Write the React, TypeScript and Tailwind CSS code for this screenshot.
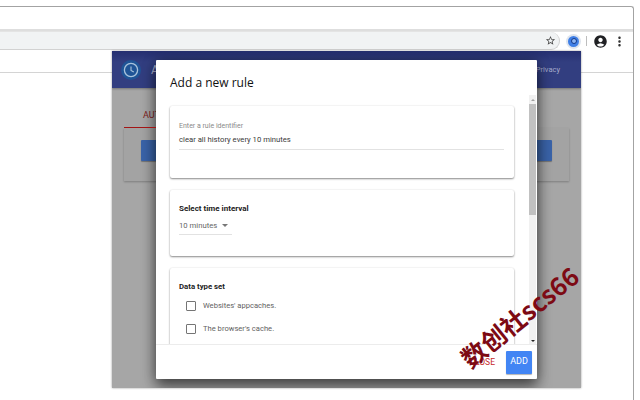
import React from 'react';
import { MdAccountCircle, MdMoreVert, MdStarBorder } from 'react-icons/md';

const roboto = { fontFamily: 'Roboto, sans-serif' };

function ClockIcon({ className, ring, hand }: { className: string; ring: string; hand: string }) {
  return (
    <svg viewBox="0 0 20 20" className={className} fill="none">
      <circle cx="10" cy="10" r="6.6" stroke={ring} strokeWidth="1.3" />
      <path d="M10 6.4V10.4L12.8 12" stroke={hand} strokeWidth="1.1" />
    </svg>
  );
}

function Card({ className, children }: { className: string; children: React.ReactNode }) {
  return (
    <div className={`bg-white rounded-[2px] shrink-0 px-[9px] shadow-[0_1px_2px_rgba(0,0,0,0.45),0_0_2px_rgba(0,0,0,0.08)] ${className}`}>
      {children}
    </div>
  );
}

function CheckRow({ label }: { label: string }) {
  return (
    <div className="flex items-center gap-[7px] pl-[7px] h-[10px]">
      <div className="size-[10px] border border-[#757575] rounded-[1px] shrink-0"></div>
      <span className="text-[7.6px] leading-none text-[#5f5f5f]">{label}</span>
    </div>
  );
}

export default function App() {
  return (
    <div className="relative w-[640px] h-[400px] bg-white overflow-hidden" style={roboto}>
      {/* browser window */}
      <div className="absolute left-0 top-[6px] w-[634px] h-[400px] border-t border-r border-[#a3a3a3] rounded-tr-[3px] flex flex-col">
        <div className="h-[24px] shrink-0 border-b-[2px] border-[#dedede]"></div>
        <div className="h-[19px] shrink-0 border-t border-[#e4e4e4] flex items-center">
          <div className="w-[560px] h-[18px] bg-[#f1f3f4] rounded-r-full border-r border-b border-[#d2d2d2] flex items-center justify-end pr-[3px]">
            <MdStarBorder className="text-[#4a4a4a]" size={11} />
          </div>
          <div className="size-[15px] ml-[6px] rounded-full bg-[#dfe5ee] flex items-center justify-center">
            <div className="size-[11px] rounded-full bg-[#3f7fe6] flex items-center justify-center">
              <div className="size-[6px] rounded-full border-[1.5px] border-[#12398a] bg-[#8db4f2]"></div>
            </div>
          </div>
          <div className="w-px h-[10px] bg-[#bdbdbd] ml-[5px]"></div>
          <MdAccountCircle className="text-[#202124] ml-[6px]" size={15} />
          <MdMoreVert className="text-[#333] ml-[4px]" size={15} />
        </div>
        <div className="h-[23px] shrink-0 border-b border-[#d4d4d4]"></div>
      </div>

      {/* extension popup, dimmed by the dialog */}
      <div className="absolute left-[112px] top-[51px] w-[469px] h-[337px] bg-[#a6a6a6] shadow-[0_0_2px_rgba(0,0,0,0.4)] flex flex-col overflow-hidden">
        <div className="h-[37px] shrink-0 bg-gradient-to-b from-[#252f70] to-[#323e80] to-[30%] flex items-center justify-between pl-[9px] pr-[21px] shadow-[0_1px_2px_rgba(0,0,0,0.3)]">
          <div className="flex items-center gap-[10px]">
            <div className="size-[20px] rounded-full bg-[#1f5496] flex items-center justify-center">
              <ClockIcon className="size-[20px]" ring="#a9c3dc" hand="#a9c3dc" />
            </div>
            <span className="text-[12px] text-[#aab0cf]">A</span>
          </div>
          <span className="text-[7.5px] text-[#a5abcb]">Privacy</span>
        </div>
        <div className="w-[445px] mt-[40px] ml-[12px] h-[53px] bg-[#a3a3a3] shadow-[0_1px_2px_rgba(0,0,0,0.25)] relative">
          <span className="absolute left-[19px] -top-[18px] text-[9px] leading-[11px] text-[#7f1d1d]">AUT</span>
          <div className="mt-[12px] mx-[17px] h-[21px] bg-[#3a63a8] rounded-[1px] shadow-[0_1px_1px_rgba(0,0,0,0.3)]"></div>
        </div>

        {/* dialog */}
        <div className="absolute left-[44px] top-[9px] w-[381px] h-[319px] bg-white rounded-[1px] shadow-[0_8px_14px_rgba(0,0,0,0.5),0_0_14px_rgba(0,0,0,0.3)] flex flex-col">
          <div className="h-[30px] shrink-0 pl-[14px] flex items-end">
            <h2 className="text-[12px] leading-none text-[#111] pb-[1px]" style={{ fontFamily: '"Open Sans", sans-serif' }}>Add a new rule</h2>
          </div>
          <div className="flex-1 min-h-0 flex pl-[14px] pt-[16px] border-b border-[#ececec] overflow-hidden">
            <div className="w-[344px] flex flex-col gap-[12px]">
              <Card className="h-[72px] pt-[17px]">
                <div className="text-[7px] leading-none text-[#8a8a8a]">Enter a rule identifier</div>
                <div className="text-[7.7px] leading-none text-[#3a3a3a] mt-[6px] pb-[5px] border-b border-[#e2e2e2] mr-[1px]">clear all history every 10 minutes</div>
              </Card>
              <Card className="h-[66px] pt-[15px]">
                <div className="text-[8px] leading-none font-bold text-[#222]">Select time interval</div>
                <div className="w-[53px] flex items-center gap-[5px] mt-[9px] pb-[4px] border-b border-[#e2e2e2]">
                  <span className="text-[7.7px] leading-none text-[#666]">10 minutes</span>
                  <div className="w-0 h-0 border-x-[3px] border-x-transparent border-t-[3px] border-t-[#777]"></div>
                </div>
              </Card>
              <Card className="h-[90px] pt-[15px]">
                <div className="text-[7.8px] leading-none font-bold text-[#222] mb-[10px]">Data type set</div>
                <div className="flex flex-col gap-[13px]">
                  <CheckRow label="Websites' appcaches." />
                  <CheckRow label="The browser's cache." />
                </div>
              </Card>
            </div>
            <div className="ml-[15px] w-[7px] -mt-[11px] h-[250px] bg-[#f1f1f1] flex flex-col items-center">
              <div className="h-[9px] flex items-center">
                <div className="w-0 h-0 border-x-[2px] border-x-transparent border-b-[2px] border-b-[#a0a0a0]"></div>
              </div>
              <div className="w-full h-[111px] bg-[#c1c1c1]"></div>
              <div className="flex-1"></div>
              <div className="h-[9px] flex items-center">
                <div className="w-0 h-0 border-x-[2px] border-x-transparent border-t-[2px] border-t-[#222]"></div>
              </div>
            </div>
          </div>
          <div className="h-[34px] shrink-0 flex items-center justify-end pr-[5px] gap-[11px]">
            <span className="text-[8.5px] text-[#c62828]">CLOSE</span>
            <button className="w-[26px] h-[23px] bg-[#4285f4] text-white text-[9px] rounded-[1px] shadow-[0_1px_1px_rgba(0,0,0,0.3)]">ADD</button>
          </div>
        </div>

        {/* active tab underline, on top of the dialog's shadow */}
        <div className="absolute left-[12px] top-[76px] w-[32px] h-px bg-[#a31515]"></div>
      </div>

      {/* watermark */}
      <div
        className="absolute left-[448px] top-[304px] -rotate-[39deg] text-[25px] leading-none font-bold text-[#7d0a14] whitespace-nowrap"
        style={{ fontFamily: '"Noto Sans CJK SC", sans-serif' }}
      >
        数创社scs66
      </div>
    </div>
  );
}
